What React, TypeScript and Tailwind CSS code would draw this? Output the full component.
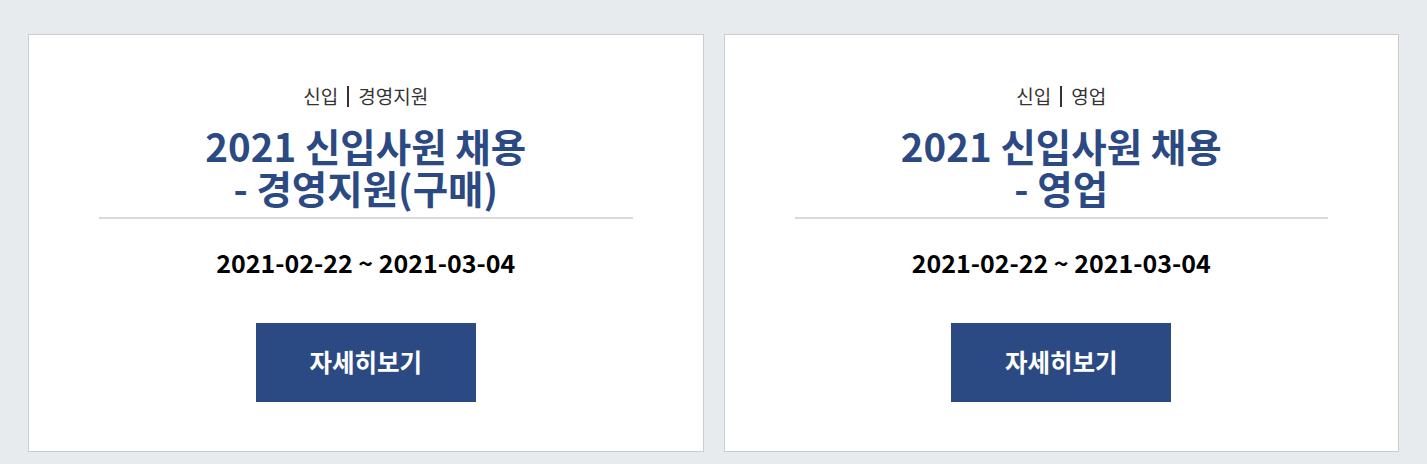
import React from "react";

const jobs = [
  { type: "신입", part: "경영지원", title: ["2021 신입사원 채용", "- 경영지원(구매)"], period: "2021-02-22 ~ 2021-03-04" },
  { type: "신입", part: "영업", title: ["2021 신입사원 채용", "- 영업"], period: "2021-02-22 ~ 2021-03-04" },
];

function JobCard({ job }: { job: (typeof jobs)[number] }) {
  return (
    <div className="flex-1 bg-white border border-[#c9cdd1] flex flex-col items-center pt-[49px] pb-[49px] px-[70px]">
      <p className="text-[19px] leading-[24px] text-[#333] flex items-center gap-[9px]">
        <span>{job.type}</span>
        <span className="w-[2px] h-[21px] bg-[#333]" />
        <span>{job.part}</span>
      </p>
      <h2 className="mt-[16px] text-[38.5px] leading-[42px] font-bold text-[#2b4a83] text-center">
        {job.title.map((t) => (
          <span key={t} className="block">{t}</span>
        ))}
      </h2>
      <div className="w-full h-[2px] bg-[#d9d9d9] mt-[9px]" />
      <p className="mt-[27px] text-[25px] leading-[32px] font-bold text-black">{job.period}</p>
      <button className="mt-[45px] w-[220px] h-[79px] bg-[#2b4a83] text-white text-[24.5px] font-bold">
        자세히보기
      </button>
    </div>
  );
}

export default function App() {
  return (
    <div
      className="w-full h-[464px] bg-[#e8ebee] pt-[34px] px-[28px] flex gap-[20px] items-start overflow-hidden"
      style={{ fontFamily: '"Noto Sans CJK KR", "Noto Sans", sans-serif' }}
    >
      {jobs.map((job) => (
        <JobCard key={job.part} job={job} />
      ))}
    </div>
  );
}
